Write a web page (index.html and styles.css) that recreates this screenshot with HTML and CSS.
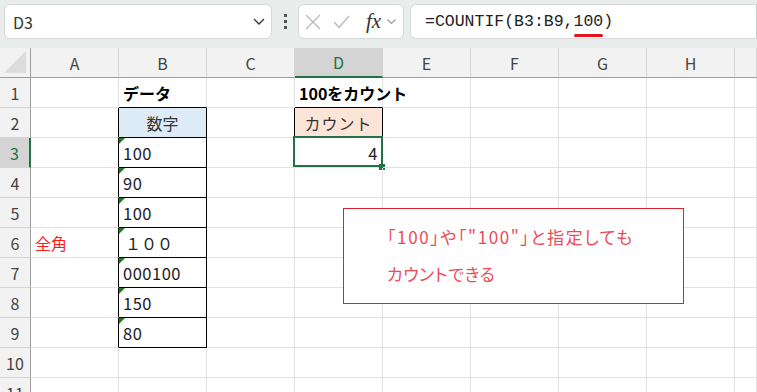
FILE: index.html
```html
<!DOCTYPE html>
<html lang="ja">

<head>
    <meta charset="UTF-8">
    <title>COUNTIF</title>
    <link rel="stylesheet" href="styles.css">
</head>

<body>
    <div class="toolbar">
        <div class="name-box">
            <span>D3</span>
            <svg class="chev" width="12" height="7" viewBox="0 0 12 7"><polyline points="1,1 6,6 11,1" fill="none" stroke="#333" stroke-width="1.3"/></svg>
        </div>
        <div class="dots"><i></i><i></i><i></i></div>
        <div class="func-box">
            <svg width="16" height="16" viewBox="0 0 16 16"><path d="M1 1 L15 15 M15 1 L1 15" stroke="#b8b8b8" stroke-width="1.3" fill="none"/></svg>
            <svg width="17" height="14" viewBox="0 0 17 14"><polyline points="1,7 6,12.5 16,1" stroke="#b8b8b8" stroke-width="1.3" fill="none"/></svg>
            <span class="fx">fx</span>
            <svg width="9" height="6" viewBox="0 0 9 6"><polyline points="0.5,0.5 4.5,4.5 8.5,0.5" stroke="#999" stroke-width="1.1" fill="none"/></svg>
        </div>
        <div class="formula-box">=COUNTIF(B3:B9,<span class="mark">100</span>)</div>
    </div>

    <div class="sheet">
        <div class="corner"></div>
        <div class="ch">A</div>
        <div class="ch">B</div>
        <div class="ch">C</div>
        <div class="ch active">D</div>
        <div class="ch">E</div>
        <div class="ch">F</div>
        <div class="ch">G</div>
        <div class="ch">H</div>
        <div class="ch"></div>

        <div class="rh">1</div>
        <div class="cell"></div>
        <div class="cell bt bold">データ</div>
        <div class="cell"></div>
        <div class="cell bt bold over">100をカウント</div>
        <div class="cell"></div><div class="cell"></div><div class="cell"></div><div class="cell"></div><div class="cell"></div>

        <div class="rh">2</div>
        <div class="cell bl"></div>
        <div class="cell box head-blue">数字</div>
        <div class="cell bl"></div>
        <div class="cell box head-peach">カウント</div>
        <div class="cell"></div><div class="cell"></div><div class="cell"></div><div class="cell"></div><div class="cell"></div>

        <div class="rh active">3</div>
        <div class="cell bl"></div>
        <div class="cell box flag data">100</div>
        <div class="cell"></div>
        <div class="cell num selected data">4</div>
        <div class="cell"></div><div class="cell"></div><div class="cell"></div><div class="cell"></div><div class="cell"></div>

        <div class="rh">4</div>
        <div class="cell bl"></div>
        <div class="cell box flag data">90</div>
        <div class="cell"></div><div class="cell"></div><div class="cell"></div><div class="cell"></div><div class="cell"></div><div class="cell"></div><div class="cell"></div>

        <div class="rh">5</div>
        <div class="cell bl"></div>
        <div class="cell box flag data">100</div>
        <div class="cell"></div><div class="cell"></div><div class="cell"></div><div class="cell"></div><div class="cell"></div><div class="cell"></div><div class="cell"></div>

        <div class="rh">6</div>
        <div class="cell bl red">全角</div>
        <div class="cell box flag wide">１００</div>
        <div class="cell"></div><div class="cell"></div><div class="cell"></div><div class="cell"></div><div class="cell"></div><div class="cell"></div><div class="cell"></div>

        <div class="rh">7</div>
        <div class="cell bl"></div>
        <div class="cell box flag data">000100</div>
        <div class="cell"></div><div class="cell"></div><div class="cell"></div><div class="cell"></div><div class="cell"></div><div class="cell"></div><div class="cell"></div>

        <div class="rh">8</div>
        <div class="cell bl"></div>
        <div class="cell box flag data">150</div>
        <div class="cell"></div><div class="cell"></div><div class="cell"></div><div class="cell"></div><div class="cell"></div><div class="cell"></div><div class="cell"></div>

        <div class="rh">9</div>
        <div class="cell bl"></div>
        <div class="cell box flag data">80</div>
        <div class="cell"></div><div class="cell"></div><div class="cell"></div><div class="cell"></div><div class="cell"></div><div class="cell"></div><div class="cell"></div>

        <div class="rh">10</div>
        <div class="cell"></div><div class="cell"></div><div class="cell"></div><div class="cell"></div><div class="cell"></div><div class="cell"></div><div class="cell"></div><div class="cell"></div><div class="cell"></div>

        <div class="rh">11</div>
        <div class="cell"></div><div class="cell"></div><div class="cell"></div><div class="cell"></div><div class="cell"></div><div class="cell"></div><div class="cell"></div><div class="cell"></div><div class="cell"></div>

        <!-- text box floating over the grid -->
        <div class="note">
            <p class="first">「100」や「"100"」と指定しても</p>
            <p>カウントできる</p>
        </div>
    </div>
</body>

</html>
```

FILE: styles.css
```css
* {
    box-sizing: border-box;
}

body {
    margin: 0;
    width: 757px;
    height: 392px;
    overflow: hidden;
    background: #fff;
    font-family: "Noto Sans CJK JP", "Noto Sans", sans-serif;
    color: #222;
}

/* formula bar */
.toolbar {
    height: 48px;
    background: #e8edeb;
    display: flex;
    align-items: flex-start;
    padding: 4px 0 0 4px;
}

.name-box {
    width: 268px;
    height: 35px;
    background: #fff;
    border: 1px solid #d5dad8;
    border-radius: 6px;
    display: flex;
    align-items: center;
    justify-content: space-between;
    padding: 0 6px 0 8px;
    font-size: 16px;
    color: #333;
}

.dots {
    width: 26px;
    height: 35px;
    display: flex;
    flex-direction: column;
    align-items: center;
    justify-content: center;
    gap: 3px;
}

.dots i {
    width: 3px;
    height: 3px;
    background: #555;
}

.func-box {
    width: 106px;
    height: 35px;
    background: #fff;
    border: 1px solid #d5dad8;
    border-radius: 6px;
    display: flex;
    align-items: center;
    padding: 0 0 0 6px;
    gap: 12px;
}

.func-box .fx {
    font-family: "Liberation Serif", serif;
    font-style: italic;
    font-size: 21px;
    color: #333;
    margin-left: 4px;
    margin-right: -6px;
    line-height: 1;
}

.formula-box {
    margin-left: 6px;
    width: 347px;
    height: 35px;
    background: #fff;
    border: 1px solid #d5dad8;
    border-right-color: #c8cdcb;
    border-radius: 6px 0 0 6px;
    padding-left: 14px;
    display: flex;
    align-items: center;
    font-family: "Liberation Mono", monospace;
    font-size: 16.5px;
    color: #222;
}

.mark {
    position: relative;
}

.mark::after {
    content: "";
    position: absolute;
    left: 0;
    right: 0;
    bottom: -6px;
    height: 3px;
    border-radius: 2px;
    background: #e0141e;
}

/* grid */
.sheet {
    position: relative;
    display: grid;
    grid-template-columns: 31px repeat(8, 88px) 1fr;
    grid-template-rows: repeat(12, 30px);
}

.corner,
.ch,
.rh {
    background: #f2f2f2;
    color: #444;
    font-size: 16px;
    display: flex;
    align-items: center;
    justify-content: center;
}

.corner {
    position: relative;
    border-right: 1px solid #9e9e9e;
    border-bottom: 1px solid #9e9e9e;
}

.corner::after {
    content: "";
    position: absolute;
    right: 4px;
    bottom: 4px;
    border-left: 22px solid transparent;
    border-bottom: 22px solid #dcdcdc;
}

.ch {
    border-right: 1px solid #d4d4d4;
    border-bottom: 1px solid #9e9e9e;
}

.rh {
    border-right: 1px solid #9e9e9e;
    border-bottom: 1px solid #d4d4d4;
}

.ch.active {
    background: #d4d4d4;
    color: #217346;
    border-bottom: 2px solid #217346;
}

.rh.active {
    background: #d4d4d4;
    color: #217346;
    border-right: 2px solid #217346;
}

.cell {
    position: relative;
    border-right: 1px solid #e1e1e1;
    border-bottom: 1px solid #e1e1e1;
    font-size: 16px;
    padding: 0 4px;
    display: flex;
    align-items: center;
    white-space: nowrap;
}

.cell.data {
    font-size: 16.5px;
    letter-spacing: 0.5px;
    color: #1c1c28;
}

.cell.bl {
    border-right-color: #000;
}

.cell.bt {
    border-bottom-color: #000;
}

.cell.box {
    border-right-color: #000;
    border-bottom-color: #000;
}

.bold {
    font-weight: bold;
    color: #000;
}

.over {
    overflow: visible;
    z-index: 1;
}

.head-blue {
    background: #ddebf7;
    justify-content: center;
    color: #333;
}

.head-peach {
    background: #fce4d6;
    justify-content: center;
    color: #333;
    letter-spacing: 1px;
}

.red {
    color: #ff1a1a;
}

.wide {
    padding-left: 6px;
}

.num {
    justify-content: flex-end;
}

/* error indicator triangle */
.flag::before {
    content: "";
    position: absolute;
    left: 0;
    top: 0;
    border-top: 6px solid #1e7d1e;
    border-right: 6px solid transparent;
}

.selected::before {
    content: "";
    position: absolute;
    left: -2px;
    top: -2px;
    right: -1px;
    bottom: 0;
    border: 2px solid #217346;
}

.selected::after {
    content: "";
    position: absolute;
    right: -3px;
    bottom: -3px;
    width: 6px;
    height: 6px;
    background: #217346;
}

.note {
    position: absolute;
    left: 343px;
    top: 160px;
    width: 341px;
    height: 96px;
    background: #fff;
    border: 1px solid #e02030;
    padding: 9px 0 0 43px;
    color: #ee4a55;
    font-size: 17px;
    line-height: 37px;
    font-feature-settings: "palt";
    letter-spacing: 0.5px;
}

.note p {
    margin: 0;
}

.note .first {
    letter-spacing: 1.6px;
}
```
